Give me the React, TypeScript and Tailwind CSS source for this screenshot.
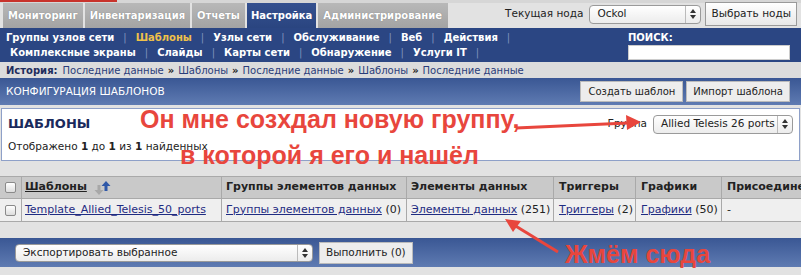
import React from "react";

const Sep = () => <span className="text-[#7f93bd] font-normal px-[9px]">|</span>;
const Raquo = () => <span className="mx-[4px] font-bold text-[#222] text-[10px]">»</span>;

function SelectArrows() {
  return (
    <svg width="6" height="10" viewBox="0 0 6 10">
      <path d="M3 0 L6 4 L0 4 Z" fill="#333" />
      <path d="M3 10 L6 6 L0 6 Z" fill="#333" />
    </svg>
  );
}

export default function App() {
  const font = { fontFamily: '"DejaVu Sans", Verdana, sans-serif' };
  const red = { fontFamily: '"Liberation Sans", Arial, sans-serif' };
  return (
    <div className="relative w-[801px] h-[275px] overflow-hidden bg-[#e2e2e2] text-[11px] text-[#222]" style={font}>
      {/* top strip */}
      <div className="h-[3px] bg-[#d6d6d6]">
        <div className="h-[2px] w-[117px] bg-[#c8332c]" />
      </div>
      {/* tabs row */}
      <div className="flex h-[25px] items-stretch">
        <div className="flex gap-[2px] pl-[3px] items-stretch">
          {["Мониторинг", "Инвентаризация", "Отчеты"].map((t) => (
            <div key={t} className="flex items-center px-[5px] bg-gradient-to-b from-[#b8b8b8] to-[#a3a3a3] text-white font-bold text-[10px] [text-shadow:0_0_1px_#777]">{t}</div>
          ))}
          <div className="flex items-center px-[4px] bg-gradient-to-b from-[#34508f] to-[#2a4580] text-white font-bold text-[10px]">Настройка</div>
          <div className="flex items-center px-[5px] w-[130px] bg-gradient-to-b from-[#b8b8b8] to-[#a3a3a3] text-white font-bold text-[10px] [text-shadow:0_0_1px_#777]">Администрирование</div>
        </div>
        <div className="flex-1 flex items-center justify-end pr-[4px] -mt-[3px] h-[28px] text-[10.5px]">
          <span className="mr-[6px]">Текущая нода</span>
          <div className="flex items-center w-[112px] h-[19px] border border-[#9a9a9a] rounded-[4px] bg-gradient-to-b from-white to-[#ececec] pl-[7px] pr-[4px]">
            <span className="flex-1">Ockol</span>
            <span className="border-l border-[#bbb] pl-[4px] h-full flex items-center"><SelectArrows /></span>
          </div>
          <div className="ml-[4px] flex items-center h-[24px] px-[5px] border border-[#9a9a9a] bg-gradient-to-b from-white to-[#e8e8e8]">Выбрать ноды</div>
        </div>
      </div>
      {/* submenu */}
      <div className="flex h-[34px] bg-[#2b4683] text-white font-bold text-[10px]">
        <div className="flex flex-col w-[600px] pt-[2px]">
          <div className="flex items-center h-[15px] pl-[6px]">
            <span>Группы узлов сети</span><Sep />
            <span className="text-[#f0c14a]">Шаблоны</span><Sep />
            <span>Узлы сети</span><Sep />
            <span>Обслуживание</span><Sep />
            <span>Веб</span><Sep />
            <span>Действия</span><Sep />
          </div>
          <div className="flex items-center h-[15px] pl-[10px]">
            <span>Комплексные экраны</span><Sep />
            <span>Слайды</span><Sep />
            <span>Карты сети</span><Sep />
            <span>Обнаружение</span><Sep />
            <span>Услуги IT</span><Sep />
          </div>
        </div>
        <div className="flex flex-col pl-[28px] pt-[2px]">
          <div className="h-[15px] flex items-center">ПОИСК:</div>
          <div className="w-[162px] h-[15px] bg-white border border-[#ccc]" />
        </div>
      </div>
      {/* history */}
      <div className="flex items-center h-[16px] bg-[#dcdcdc] pl-[6px] text-[#2a3d7a] text-[10px]">
        <span className="font-bold text-[#1f2d5c] text-[10px] mr-[5px]">История:</span>
        <span>Последние данные</span><Raquo />
        <span>Шаблоны</span><Raquo />
        <span>Последние данные</span><Raquo />
        <span>Шаблоны</span><Raquo />
        <span>Последние данные</span>
      </div>
      {/* config header */}
      <div className="flex items-center h-[27px] bg-gradient-to-b from-[#3a5794] to-[#5f7bb2] pl-[6px] pr-[11px] text-white">
        <span className="flex-1 text-[10.5px]">КОНФИГУРАЦИЯ ШАБЛОНОВ</span>
        <div className="flex gap-[3px] text-[10px]">
          <div className="flex items-center h-[21px] px-[7px] bg-[#ededed] text-[#222] border border-[#bbb]">Создать шаблон</div>
          <div className="flex items-center h-[21px] px-[6px] bg-[#ededed] text-[#222] border border-[#bbb]">Импорт шаблона</div>
        </div>
      </div>
      {/* panel */}
      <div className="mt-[3px] mx-[1px] h-[53px] bg-white border border-[#8ea0c8] px-[6px]">
        <div className="flex items-center h-[30px]">
          <span className="flex-1 font-bold text-[13px] text-[#1a2a5c]">ШАБЛОНЫ</span>
          <span className="mr-[6px] text-[10.5px]">Группа</span>
          <div className="flex items-center w-[140px] h-[19px] border border-[#9a9a9a] rounded-[4px] bg-gradient-to-b from-white to-[#ececec] pl-[7px] pr-[4px] whitespace-nowrap text-[10.5px]">
            <span className="flex-1">Allied Telesis 26 ports</span>
            <span className="border-l border-[#bbb] pl-[4px] h-full flex items-center"><SelectArrows /></span>
          </div>
        </div>
        <div className="flex items-center h-[16px] text-[10.5px]">
          <span>Отображено <b>1</b> до <b>1</b> из <b>1</b> найденных</span>
        </div>
      </div>
      {/* table */}
      <div className="mt-[15px]">
        <div className="flex h-[23px] bg-[#c9c9c9] border-y border-[#a9a9a9] font-bold">
          <div className="w-[22px] flex items-center justify-center border-r border-[#a9a9a9]">
            <div className="w-[11px] h-[11px] rounded-[2px] border border-[#8a8a8a] bg-gradient-to-b from-white to-[#ddd]" />
          </div>
          <div className="w-[200px] flex items-center pl-[3px] border-r border-[#a9a9a9]">
            <span className="underline">Шаблоны</span>
            <svg width="20" height="16" viewBox="0 0 20 16" className="ml-[6px]">
              <path d="M6 15 L1.5 10 L4.5 10 L4.5 5 L7.5 5 L7.5 10 L10.5 10 Z" fill="#a8a8a8" />
              <path d="M13 1 L17.5 6 L14.5 6 L14.5 11 L11.5 11 L11.5 6 L8.5 6 Z" fill="#2f58a8" />
            </svg>
          </div>
          <div className="w-[185px] flex items-center pl-[4px] border-r border-[#a9a9a9]">Группы элементов данных</div>
          <div className="w-[147px] flex items-center pl-[4px] border-r border-[#a9a9a9]">Элементы данных</div>
          <div className="w-[82px] flex items-center pl-[5px] border-r border-[#a9a9a9]">Триггеры</div>
          <div className="w-[86px] flex items-center pl-[5px] border-r border-[#a9a9a9]">Графики</div>
          <div className="flex-1 flex items-center pl-[5px] whitespace-nowrap overflow-hidden">Присоединенные</div>
        </div>
        <div className="flex h-[23px] bg-[#efefef] border-b border-[#a9a9a9] whitespace-nowrap">
          <div className="w-[22px] flex items-center justify-center border-r border-[#a9a9a9]">
            <div className="w-[11px] h-[11px] rounded-[2px] border border-[#8a8a8a] bg-gradient-to-b from-white to-[#ddd]" />
          </div>
          <div className="w-[200px] flex items-center pl-[3px] border-r border-[#a9a9a9] text-[#1f2c82]"><span className="underline">Template_Allied_Telesis_50_ports</span></div>
          <div className="w-[185px] flex items-center pl-[4px] border-r border-[#a9a9a9]"><span className="underline text-[#1f2c82]">Группы элементов данных</span>&nbsp;(0)</div>
          <div className="w-[147px] flex items-center pl-[4px] border-r border-[#a9a9a9]"><span className="underline text-[#1f2c82]">Элементы данных</span>&nbsp;(251)</div>
          <div className="w-[82px] flex items-center pl-[5px] border-r border-[#a9a9a9]"><span className="underline text-[#1f2c82]">Триггеры</span>&nbsp;(2)</div>
          <div className="w-[86px] flex items-center pl-[5px] border-r border-[#a9a9a9]"><span className="underline text-[#1f2c82]">Графики</span>&nbsp;(50)</div>
          <div className="flex-1 flex items-center pl-[5px]">-</div>
        </div>
      </div>
      {/* bottom bar */}
      <div className="mt-[16px] flex items-center h-[29px] bg-gradient-to-b from-[#3a5794] to-[#5f7bb2] pl-[15px] gap-[6px] text-[10.5px]">
        <div className="flex items-center w-[298px] h-[18px] rounded-[4px] border border-[#9a9a9a] bg-gradient-to-b from-white to-[#ececec] pl-[7px] pr-[4px]">
          <span className="flex-1">Экспортировать выбранное</span>
          <span className="border-l border-[#bbb] pl-[4px] h-full flex items-center"><SelectArrows /></span>
        </div>
        <div className="flex items-center h-[22px] px-[6px] bg-[#ededed] border border-[#bbb]">Выполнить (0)</div>
      </div>

      {/* annotations */}
      <div className="absolute left-[140px] top-[107px] text-[25px] font-bold text-[#e8463d] leading-none whitespace-nowrap" style={red}>Он мне созхдал новую группу,</div>
      <div className="absolute left-[180px] top-[143px] text-[25px] font-bold text-[#e8463d] leading-none whitespace-nowrap" style={red}>в которой я его и нашёл</div>
      <div className="absolute left-[565px] top-[242px] text-[25px] font-bold text-[#e8463d] leading-none whitespace-nowrap" style={red}>Жмём сюда</div>
      <svg className="absolute left-0 top-0 pointer-events-none" width="801" height="275">
        <line x1="516" y1="128" x2="628" y2="123" stroke="#e8463d" strokeWidth="3" />
        <path d="M641 122 L626 115 L627 130 Z" fill="#e8463d" />
        <line x1="558" y1="252" x2="514" y2="225" stroke="#e8463d" strokeWidth="3" />
        <path d="M505 219 L521 221 L513 232 Z" fill="#e8463d" />
      </svg>
    </div>
  );
}
